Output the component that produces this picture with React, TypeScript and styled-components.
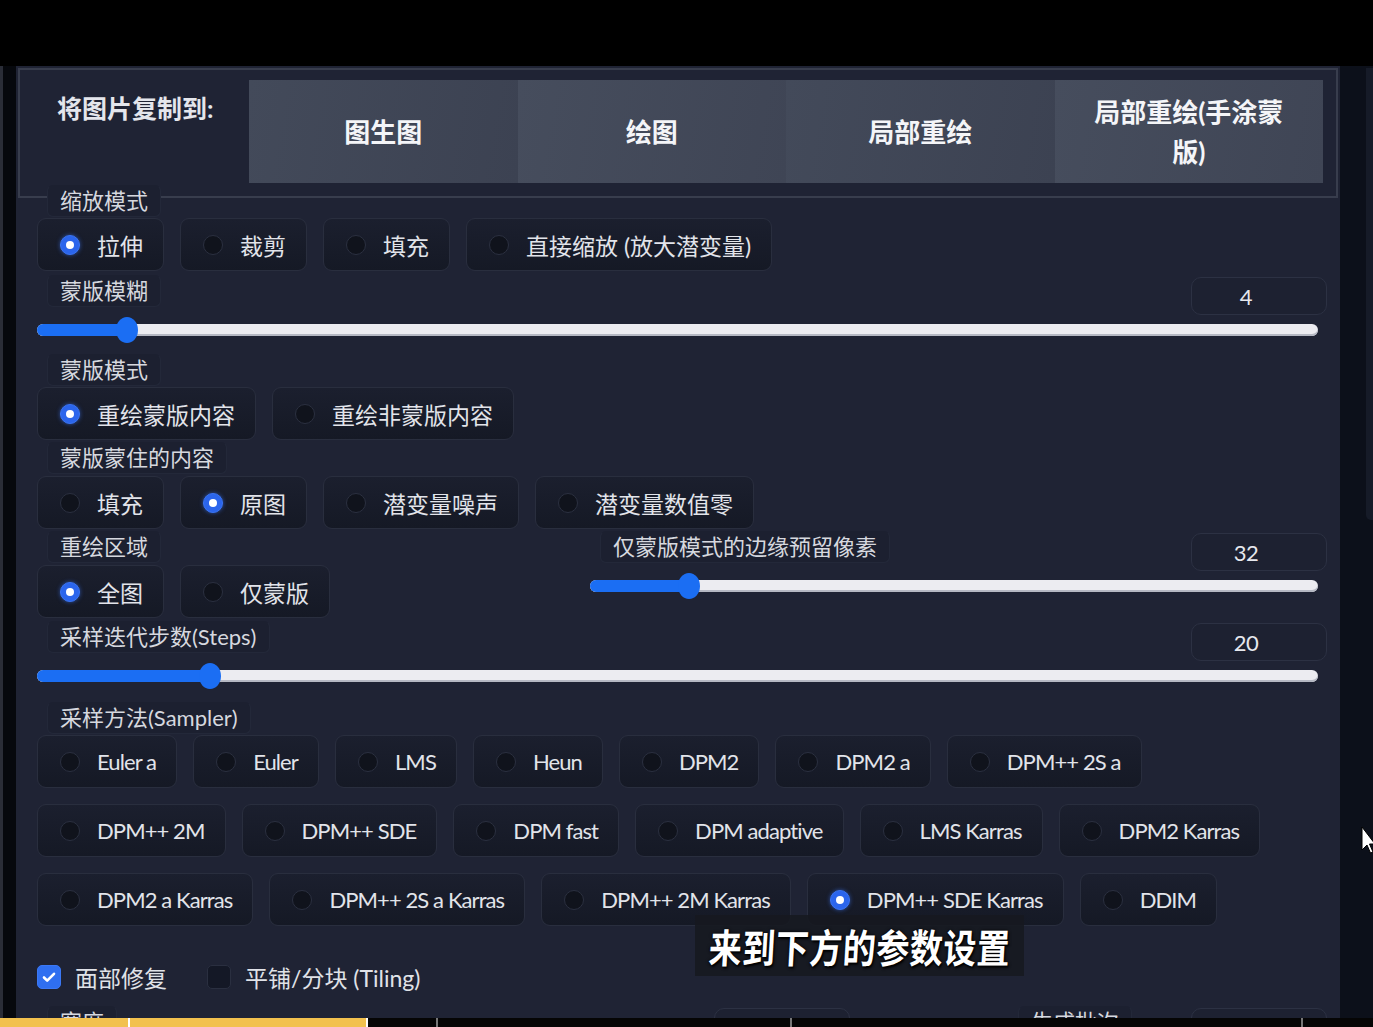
import React from "react";
import styled, { createGlobalStyle } from "styled-components";

const Global = createGlobalStyle`
  html, body { margin: 0; padding: 0; background: #000; }
  body {
    font-family: Lato, "Noto Sans CJK SC", "Noto Sans", sans-serif;
    overflow: hidden;
  }
  * { box-sizing: border-box; }
`;

const Screen = styled.div`
  position: relative;
  width: 1373px;
  height: 1027px;
  display: flex;
  flex-direction: column;
  background: #000;
  overflow: hidden;
`;

const TopBar = styled.div`
  height: 66px;
  flex: none;
  background: #000;
`;

const Middle = styled.div`
  flex: 1;
  min-height: 0;
  display: flex;
  overflow: hidden;
`;

const LeftEdge = styled.div`
  width: 16px;
  flex: none;
  background: #06080d;
  border-left: 3px solid #2a2d37;
`;

const Panel = styled.div`
  flex: 1;
  min-width: 0;
  background: #1f2334;
  padding: 2px 2px 0;
  display: flex;
  flex-direction: column;
  overflow: hidden;
`;

const Gutter = styled.div`
  width: 33px;
  flex: none;
  background: #0c101a;
  display: flex;
  justify-content: flex-end;
`;

const ScrollThumb = styled.div`
  width: 7px;
  height: 452px;
  margin-top: 2px;
  background: #161b28;
  border-radius: 0 0 0 5px;
`;

const BottomStrip = styled.div`
  height: 9px;
  flex: none;
  display: flex;
  background: #050505;
`;

const StripSeg = styled.div<{ $w: number; $bg: string }>`
  width: ${(p) => p.$w}px;
  flex: none;
  background: ${(p) => p.$bg};
  border-right: 2px solid ${(p) => (p.$bg === "#050505" ? "#777" : "#fff")};
`;

/* copy-to box */
const CopyBox = styled.div`
  height: 130px;
  flex: none;
  border: 2px solid #383d4d;
  display: grid;
  grid-template-columns: 229px 1fr;
  padding: 10px 13px 13px 0;
`;

const CopyLabel = styled.div`
  padding: 11px 0 0 37px;
  font-size: 25px;
  font-weight: 700;
  line-height: 34px;
  color: #e4e6ec;
  white-space: nowrap;
`;

const Tabs = styled.div`
  display: grid;
  grid-template-columns: repeat(4, 1fr);
`;

const Tab = styled.div<{ $shade: number }>`
  display: flex;
  align-items: center;
  justify-content: center;
  text-align: center;
  background: linear-gradient(
    100deg,
    ${(p) => (p.$shade ? "#464d5d" : "#434a5a")},
    ${(p) => (p.$shade ? "#3f4555" : "#3c4252")}
  );
  color: #f4f5f8;
  font-size: 26px;
  font-weight: 700;
  line-height: 40px;
`;

/* content */
const Content = styled.div`
  display: flex;
  flex-direction: column;
  padding: 0 11px 0 19px;
`;

const GroupLabel = styled.div<{ $mt?: number }>`
  align-self: flex-start;
  margin-left: 10px;
  margin-top: ${(p) => p.$mt ?? 0}px;
  height: 32px;
  padding: 0 12px;
  line-height: 30px;
  font-size: 22px;
  color: #d6d8df;
  background: #1c2030;
  border: 1px solid #232839;
  border-top-color: transparent;
  border-radius: 6px;
  white-space: nowrap;
  position: relative;
`;

const RadioRow = styled.div<{ $mt?: number }>`
  display: flex;
  flex-wrap: wrap;
  gap: 16px;
  margin-top: ${(p) => p.$mt ?? 0}px;
`;

const RadioItem = styled.div<{ $latin?: boolean }>`
  height: 53px;
  display: flex;
  align-items: center;
  gap: 17px;
  padding: 0 20px 0 22px;
  border-radius: 9px;
  border: 1px solid #292e3e;
  background: linear-gradient(180deg, #1b1f2e, #151925);
  font-size: ${(p) => (p.$latin ? 22 : 23)}px;
  letter-spacing: ${(p) => (p.$latin ? "-0.9px" : "0")};
  color: #e2e4ea;
  white-space: nowrap;
`;

const RadioDot = styled.span<{ $on: boolean }>`
  width: 20px;
  height: 20px;
  flex: none;
  border-radius: 50%;
  background: ${(p) => (p.$on ? "#2b65ec" : "#10131c")};
  border: 1px solid ${(p) => (p.$on ? "#3a74f2" : "#2b3040")};
  box-shadow: ${(p) => (p.$on ? "0 0 4px rgba(60,120,255,0.6)" : "none")};
  display: flex;
  align-items: center;
  justify-content: center;
  &::after {
    content: "";
    width: 8px;
    height: 8px;
    border-radius: 50%;
    background: #fff;
    display: ${(p) => (p.$on ? "block" : "none")};
  }
`;

const SliderHead = styled.div<{ $mt?: number }>`
  display: flex;
  justify-content: space-between;
  align-items: flex-start;
  margin-top: ${(p) => p.$mt ?? 0}px;
  height: 40px;
`;

const NumberBox = styled.div`
  width: 136px;
  height: 38px;
  margin-top: 2px;
  padding-right: 26px;
  border: 1px solid #2c3143;
  border-radius: 10px;
  background: #1d2131;
  display: flex;
  align-items: center;
  justify-content: center;
  font-size: 22px;
  letter-spacing: -0.5px;
  color: #e6e8ee;
`;

const SliderTrack = styled.div`
  position: relative;
  height: 26px;
  margin: 2px 9px 0 0;
`;

const Rail = styled.div`
  position: absolute;
  left: 0;
  right: 0;
  top: 7px;
  height: 12px;
  border-radius: 6px;
  background: #ececf1;
  box-shadow: inset 0 -2px 0 #b5b8c3;
`;

const Fill = styled.div`
  position: absolute;
  left: 0;
  top: 7px;
  height: 12px;
  border-radius: 6px 0 0 6px;
  background: #1b6ef3;
`;

const Thumb = styled.div`
  position: absolute;
  top: 0;
  width: 22px;
  height: 26px;
  margin-left: -11px;
  border-radius: 50%;
  background: #1b6ef3;
`;

const TwoCol = styled.div<{ $cols: string; $gap: number; $mt?: number }>`
  display: grid;
  grid-template-columns: ${(p) => p.$cols};
  column-gap: ${(p) => p.$gap}px;
  margin-top: ${(p) => p.$mt ?? 0}px;
`;

const Col = styled.div`
  display: flex;
  flex-direction: column;
  min-width: 0;
`;

const CheckRow = styled.div`
  display: flex;
  align-items: center;
  height: 30px;
  margin-top: 36px;
  gap: 40px;
`;

const CheckItem = styled.label`
  display: flex;
  align-items: center;
  gap: 14px;
  font-size: 23px;
  color: #e0e2e8;
  white-space: nowrap;
`;

const CheckBox = styled.span<{ $on: boolean }>`
  width: 24px;
  height: 24px;
  border-radius: 5px;
  background: ${(p) => (p.$on ? "#2f6ff0" : "#141826")};
  border: 1px solid ${(p) => (p.$on ? "#3b78f5" : "#2a2f40")};
  display: flex;
  align-items: center;
  justify-content: center;
`;

const Subtitle = styled.div`
  position: absolute;
  left: 695px;
  top: 915px;
  width: 329px;
  height: 61px;
  background: rgba(22, 24, 32, 0.86);
  display: flex;
  align-items: center;
  justify-content: center;
  color: #fff;
  font-family: "Noto Sans CJK SC", sans-serif;
  font-size: 33px;
  font-weight: 700;
  letter-spacing: 0.5px;
  text-shadow: 0 0 3px #000, 1px 2px 2px #000;
`;

const SubText = styled.span`
  display: inline-block;
  transform: scale(1, 1.2) skewX(-4deg);
`;

const Cursor = styled.svg`
  position: absolute;
  left: 1361px;
  top: 826px;
`;

function Slider({ value, max }: { value: number; max: number }) {
  const pct = value / max;
  const pos = `calc(11px + (100% - 22px) * ${pct})`;
  return (
    <SliderTrack>
      <Rail />
      <Fill style={{ width: pos }} />
      <Thumb style={{ left: pos }} />
    </SliderTrack>
  );
}

function Radios({ items, on, mt }: { items: string[]; on?: string; mt?: number }) {
  return (
    <RadioRow $mt={mt}>
      {items.map((t) => (
        <RadioItem key={t}>
          <RadioDot $on={t === on} />
          {t}
        </RadioItem>
      ))}
    </RadioRow>
  );
}

const samplers = [
  "Euler a", "Euler", "LMS", "Heun", "DPM2", "DPM2 a", "DPM++ 2S a",
  "DPM++ 2M", "DPM++ SDE", "DPM fast", "DPM adaptive", "LMS Karras", "DPM2 Karras",
  "DPM2 a Karras", "DPM++ 2S a Karras", "DPM++ 2M Karras", "DPM++ SDE Karras", "DDIM",
];

const SamplerWrap = styled(RadioRow)`
  row-gap: 16px;
`;

function Check() {
  return (
    <svg width="16" height="16" viewBox="0 0 16 16">
      <path d="M3 8.5l3.2 3.2L13 4.8" fill="none" stroke="#fff" strokeWidth="2.6" strokeLinecap="round" strokeLinejoin="round" />
    </svg>
  );
}

export default function App() {
  return (
    <Screen>
      <Global />
      <TopBar />
      <Middle>
        <LeftEdge />
        <Panel>
          <CopyBox>
            <CopyLabel>将图片复制到:</CopyLabel>
            <Tabs>
              <Tab $shade={0}>图生图</Tab>
              <Tab $shade={1}>绘图</Tab>
              <Tab $shade={0}>局部重绘</Tab>
              <Tab $shade={1}>
                局部重绘(手涂蒙
                <br />
                版)
              </Tab>
            </Tabs>
          </CopyBox>
          <Content>
            <GroupLabel $mt={-13}>缩放模式</GroupLabel>
            <Radios mt={1} items={["拉伸", "裁剪", "填充", "直接缩放 (放大潜变量)"]} on="拉伸" />

            <SliderHead $mt={4}>
              <GroupLabel>蒙版模糊</GroupLabel>
              <NumberBox>4</NumberBox>
            </SliderHead>
            <Slider value={4} max={64} />

            <GroupLabel $mt={11}>蒙版模式</GroupLabel>
            <Radios mt={1} items={["重绘蒙版内容", "重绘非蒙版内容"]} on="重绘蒙版内容" />

            <GroupLabel $mt={2}>蒙版蒙住的内容</GroupLabel>
            <Radios mt={2} items={["填充", "原图", "潜变量噪声", "潜变量数值零"]} on="原图" />

            <TwoCol $cols="538px 1fr" $gap={15} $mt={2}>
              <Col>
                <GroupLabel>重绘区域</GroupLabel>
                <Radios mt={2} items={["全图", "仅蒙版"]} on="全图" />
              </Col>
              <Col>
                <SliderHead>
                  <GroupLabel>仅蒙版模式的边缘预留像素</GroupLabel>
                  <NumberBox>32</NumberBox>
                </SliderHead>
                <Slider value={32} max={256} />
              </Col>
            </TwoCol>

            <SliderHead $mt={3}>
              <GroupLabel>采样迭代步数(Steps)</GroupLabel>
              <NumberBox>20</NumberBox>
            </SliderHead>
            <Slider value={20} max={155} />

            <GroupLabel $mt={13}>采样方法(Sampler)</GroupLabel>
            <SamplerWrap $mt={1}>
              {samplers.map((t) => (
                <RadioItem key={t} $latin>
                  <RadioDot $on={t === "DPM++ SDE Karras"} />
                  {t}
                </RadioItem>
              ))}
            </SamplerWrap>

            <CheckRow>
              <CheckItem>
                <CheckBox $on>
                  <Check />
                </CheckBox>
                面部修复
              </CheckItem>
              <CheckItem>
                <CheckBox $on={false} />
                平铺/分块 (Tiling)
              </CheckItem>
            </CheckRow>

            <TwoCol $cols="813px 1fr" $gap={158} $mt={14}>
              <Col>
                <SliderHead>
                  <GroupLabel>宽度</GroupLabel>
                  <NumberBox>512</NumberBox>
                </SliderHead>
              </Col>
              <Col>
                <SliderHead>
                  <GroupLabel>生成批次</GroupLabel>
                  <NumberBox>1</NumberBox>
                </SliderHead>
              </Col>
            </TwoCol>
          </Content>
        </Panel>
        <Gutter>
          <ScrollThumb />
        </Gutter>
      </Middle>
      <BottomStrip>
        <StripSeg $w={130} $bg="#f2c14e" />
        <StripSeg $w={238} $bg="#f2c14e" />
        <StripSeg $w={70} $bg="#050505" />
        <StripSeg $w={354} $bg="#050505" />
        <StripSeg $w={511} $bg="#050505" />
      </BottomStrip>
      <Subtitle>
        <SubText>来到下方的参数设置</SubText>
      </Subtitle>
      <Cursor width="14" height="30" viewBox="0 0 14 30">
        <path d="M1 1 L1 24 L6 19 L9.5 27 L12 26 L8.5 18 L14 18 Z" fill="#fff" stroke="#000" strokeWidth="1" />
      </Cursor>
    </Screen>
  );
}
